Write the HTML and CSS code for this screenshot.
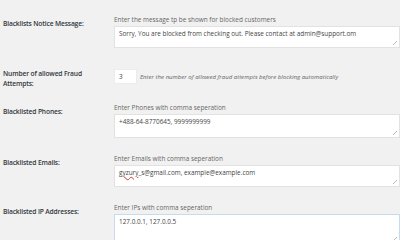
FILE: index.html
```html
<!DOCTYPE html>
<html>
<head>
<meta charset="utf-8">
<link rel="stylesheet" href="styles.css">
</head>
<body>
<div class="form">
  <div class="row r1">
    <div class="label">Blacklists Notice Message:</div>
    <div class="cell">
      <div class="hint">Enter the message tp be shown for blocked customers</div>
      <div class="box h21">Sorry, You are blocked from checking out. Please contact at admin@support.om</div>
    </div>
  </div>
  <div class="row r2">
    <div class="label two">Number of allowed Fraud Attempts:</div>
    <div class="cell inline">
      <div class="num">3</div>
      <div class="ihint">Enter the number of allowed fraud attempts before blocking automatically</div>
    </div>
  </div>
  <div class="row r3">
    <div class="label">Blacklisted Phones:</div>
    <div class="cell">
      <div class="hint">Enter Phones with comma seperation</div>
      <div class="box h24">+488-64-8770645, 9999999999</div>
    </div>
  </div>
  <div class="row r4">
    <div class="label">Blacklisted Emails:</div>
    <div class="cell">
      <div class="hint">Enter Emails with comma seperation</div>
      <div class="box h21"><span class="spell">gyzury</span>_s@gmail.com, example@example.com</div>
    </div>
  </div>
  <div class="row r5">
    <div class="label">Blacklisted IP Addresses:</div>
    <div class="cell">
      <div class="hint">Enter IPs with comma seperation</div>
      <div class="box h28 focus">127.0.0.1, 127.0.0.5</div>
    </div>
  </div>
</div>
</body>
</html>
```

FILE: styles.css
```css
html, body {
  margin: 0;
  padding: 0;
  background: #f1f1f1;
  width: 400px;
  height: 240px;
  overflow: hidden;
}
body {
  font-family: "Open Sans", "Noto Sans", sans-serif;
  color: #23282d;
}
.form {
  display: flex;
  flex-direction: column;
  padding-left: 3px;
}
.row {
  display: grid;
  grid-template-columns: 111px 286px;
}
.r1 { margin-top: 15px; }
.r2 { margin-top: 21px; }
.r3 { margin-top: 14px; }
.r4 { margin-top: 16px; }
.r5 { margin-top: 16px; }
.label {
  font-size: 6.7px;
  font-weight: 600;
  letter-spacing: -0.15px;
  line-height: 10px;
  padding-top: 4px;
  color: #32373c;
}
.label.two {
  padding-top: 0;
  width: 100px;
}
.cell {
  display: flex;
  flex-direction: column;
}
.cell.inline {
  flex-direction: row;
  align-items: center;
  gap: 3px;
  align-self: start;
}
.hint {
  font-size: 6.4px;
  line-height: 10px;
  color: #666;
}
.ihint {
  font-size: 6.05px;
  font-style: italic;
  color: #666;
}
.box {
  position: relative;
  margin-top: 1px;
  background: #fff;
  border: 1px solid #e2e2e2;
  box-sizing: border-box;
  font-size: 6.4px;
  line-height: 10px;
  padding: 2px 4px 1px;
  color: #444;
}
.box::after {
  content: "";
  position: absolute;
  right: 2px;
  bottom: 2px;
  width: 4px;
  height: 4px;
  background: linear-gradient(135deg, transparent 45%, #bbb 45%, #bbb 55%, transparent 55%);
}
.h21 { height: 22px; }
.h24 { height: 24px; }
.h28 { height: 30px; }
.focus { border-color: #c5dcee; }
.num {
  width: 23px;
  height: 15px;
  box-sizing: border-box;
  background: #fff;
  border: 1px solid #ececec;
  font-size: 6.4px;
  line-height: 13px;
  padding-left: 4px;
  color: #444;
}
.spell {
  text-decoration: underline wavy #d33;
  text-decoration-thickness: 1px;
  text-underline-offset: 1px;
}
```
